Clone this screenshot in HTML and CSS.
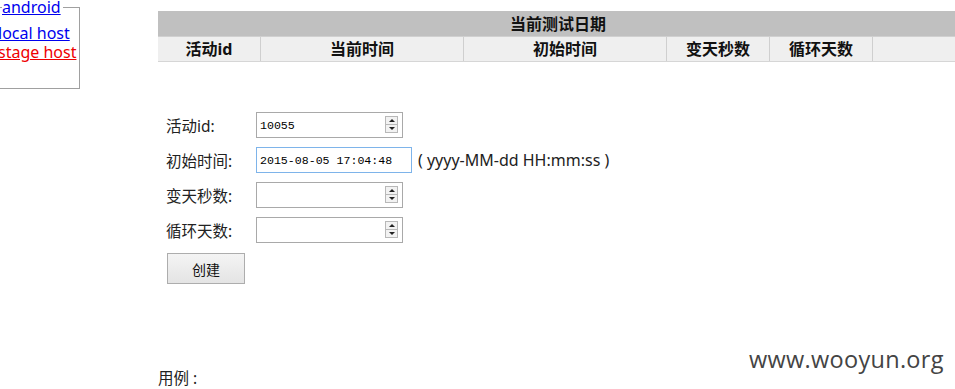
FILE: index.html
```html
<!DOCTYPE html>
<html>
<head>
<meta charset="utf-8">
<link rel="stylesheet" href="styles.css">
</head>
<body>
<div class="page">
  <fieldset class="hosts">
    <legend><a href="#" class="blue">android</a></legend>
    <a href="#" class="blue">local host</a>
    <a href="#" class="red">stage host</a>
  </fieldset>
  <div class="main">
    <div class="table">
      <div class="title">当前测试日期</div>
      <div class="th">活动id</div>
      <div class="th">当前时间</div>
      <div class="th">初始时间</div>
      <div class="th">变天秒数</div>
      <div class="th">循环天数</div>
      <div class="th"></div>
    </div>
    <form class="form">
      <div class="row">
        <label>活动id:</label>
        <span class="spin-wrap"><input class="num" value="10055"><span class="spin"><i class="up"></i><i class="down"></i></span></span>
      </div>
      <div class="row">
        <label>初始时间:</label>
        <input class="date" value="2015-08-05 17:04:48">
        <span class="hint">( yyyy-MM-dd HH:mm:ss )</span>
      </div>
      <div class="row">
        <label>变天秒数:</label>
        <span class="spin-wrap"><input class="num" value=""><span class="spin"><i class="up"></i><i class="down"></i></span></span>
      </div>
      <div class="row">
        <label>循环天数:</label>
        <span class="spin-wrap"><input class="num" value=""><span class="spin"><i class="up"></i><i class="down"></i></span></span>
      </div>
      <button type="button" class="btn">创建</button>
    </form>
    <div class="example">用例 :</div>
  </div>
  <div class="watermark">www.wooyun.org</div>
</div>
</body>
</html>
```
FILE: styles.css
```css
html, body {
  margin: 0;
  padding: 0;
  background: #fff;
  overflow: hidden;
}
body {
  font-family: "Noto Sans", "Noto Sans CJK SC", sans-serif;
  color: #111;
  width: 955px;
  height: 389px;
}
.page {
  display: flex;
  align-items: flex-start;
  position: relative;
  height: 389px;
}
.hosts {
  margin: 0 0 0 -40px;
  padding: 0 0 0 37px;
  width: 120px;
  min-width: 0;
  box-sizing: border-box;
  height: 89px;
  border: 1px solid #a0a0a0;
  display: flex;
  flex-direction: column;
  font-size: 16px;
  line-height: 19px;
  flex: none;
}
.hosts legend {
  padding: 0 2px 0 0;
  margin-left: 4px;
  line-height: 14px;
}
.hosts a {
  display: block;
  white-space: nowrap;
}
.hosts > a:first-of-type {
  margin-top: 10px;
}
.blue { color: #0000ee; }
.red { color: #ee0000; }

.main {
  margin-left: 78px;
  width: 800px;
  flex: none;
  padding-top: 11px;
}
.table {
  display: grid;
  grid-template-columns: 103px 203px 203px 103px 103px 85px;
  border-bottom: 1px solid #d6d6d6;
  font-weight: bold;
  font-size: 16px;
}
.title {
  grid-column: 1 / -1;
  background: #c0c0c0;
  height: 25px;
  line-height: 27px;
  text-align: center;
  border-bottom: 1px solid #d0d0d0;
}
.th {
  background: #efefef;
  height: 24px;
  line-height: 24px;
  text-align: center;
  border-right: 1px solid #cfcfcf;
}
.th:last-child { border-right: none; }

.form {
  margin-top: 50px;
  padding-left: 8px;
  display: flex;
  flex-direction: column;
  align-items: flex-start;
}
.row {
  display: flex;
  align-items: center;
  height: 26px;
  margin-bottom: 9px;
  font-size: 15.5px;
}
.row label {
  width: 90px;
  color: #222;
}
.spin-wrap {
  position: relative;
  display: inline-block;
}
input {
  box-sizing: border-box;
  height: 26px;
  border: 1px solid #a9a9a9;
  font-family: "Liberation Mono", monospace;
  font-size: 11.6px;
  padding: 0 3px;
  color: #000;
  outline: none;
}
.num { width: 147px; }
.date {
  width: 156px;
  border-color: #7eb4ea;
}
.spin {
  position: absolute;
  right: 5px;
  top: 4px;
  width: 13px;
  height: 17px;
  border: 1px solid #b8b8b8;
  box-sizing: border-box;
  background: #f2f2f2;
  display: flex;
  flex-direction: column;
}
.spin i {
  flex: 1;
  position: relative;
}
.spin .up { border-bottom: 1px solid #b8b8b8; }
.spin i::after {
  content: "";
  position: absolute;
  left: 3px;
  top: 2px;
  border-left: 3px solid transparent;
  border-right: 3px solid transparent;
}
.spin .up::after { border-bottom: 3px solid #222; }
.spin .down::after { border-top: 3px solid #222; top: 2px; }
.hint {
  margin-left: 6px;
  font-size: 16px;
  color: #222;
}
.btn {
  margin-top: 1px;
  margin-left: 1px;
  width: 78px;
  height: 31px;
  border: 1px solid #adadad;
  background: linear-gradient(#f4f4f4, #e4e4e4);
  font-family: "Noto Sans CJK SC", sans-serif;
  font-size: 14px;
  color: #111;
  padding: 0;
}
.example {
  margin-top: 82px;
  font-size: 15.5px;
  color: #222;
}
.watermark {
  position: absolute;
  left: 749px;
  top: 343px;
  font-family: "Open Sans", "Noto Sans", sans-serif;
  font-size: 23.5px;
  color: #444;
  letter-spacing: 0.3px;
}
```
